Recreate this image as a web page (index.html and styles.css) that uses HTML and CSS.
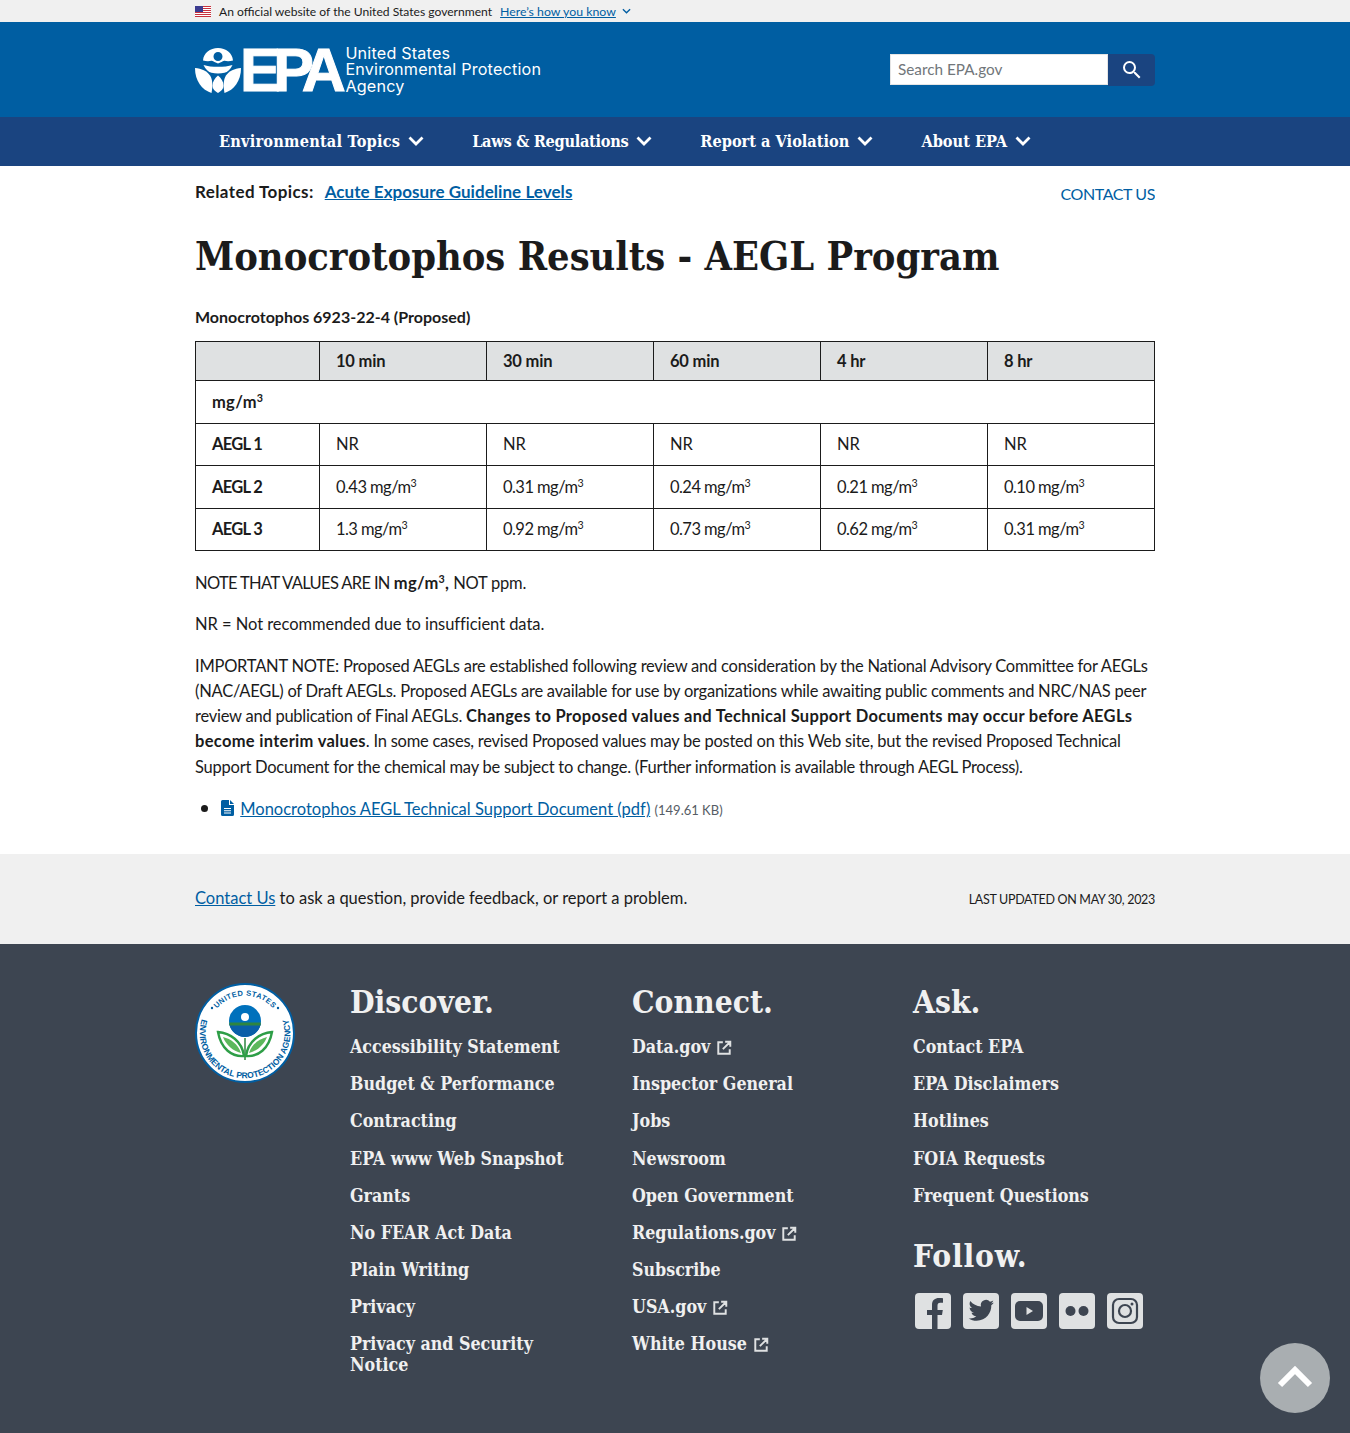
FILE: index.html
```html
<!DOCTYPE html>
<html lang="en">
<head>
<meta charset="utf-8">
<title>Monocrotophos Results - AEGL Program</title>
<link rel="stylesheet" href="styles.css">
</head>
<body>
<div class="gov-banner"><div class="wrap gov-inner">
  <svg class="flag" viewBox="0 0 16 11" width="16" height="11"><rect width="16" height="11" fill="#fff"/><g fill="#c8313e"><rect width="16" height="1"/><rect y="2" width="16" height="1"/><rect y="4" width="16" height="1"/><rect y="6" width="16" height="1"/><rect y="8" width="16" height="1"/><rect y="10" width="16" height="1"/></g><rect width="8" height="6" fill="#3b3b8f"/></svg>
  <span class="gov-text">An official website of the United States government</span>
  <a class="gov-link" href="#">Here’s how you know</a>
  <svg class="gov-chev" viewBox="0 0 10 6" width="9" height="6"><path d="M1 1l4 4 4-4" fill="none" stroke="#005ea2" stroke-width="1.5"/></svg>
</div></div>

<header class="masthead"><div class="wrap mast-inner">
  <a class="logo" href="#">
    <svg class="logo-mark" viewBox="0 0 46 46" width="46" height="46"><g fill="#fff"><path fill-rule="evenodd" d="M8 13.500C8.500 6 15 1 23 1s14.500 5 15 12.500c-3 .8-6 .8-8.500.3-1-.2-2 .5-3 1.200l-3.500 1.500-3.500-1.500c-1-.7-2-1.400-3-1.200-2.500.5-5.500.5-8.500-.3zM23 5a4.500 4.500 0 1 0 0 9 4.500 4.500 0 0 0 0-9z"/><path d="M8.500 18c4 1.300 9 1.800 14.500 1.800s10.500-.5 14.500-1.800c-2 4.500-5 7-8 7.800-2 .5-4.200.6-6.500.6s-4.500-.1-6.500-.6c-3-.8-6-3.300-8-7.800z"/><path d="M0 21c6.500.5 12 3 15 7.500 2.500 3.800 3 10 1.500 17.500C7 43 0 34 0 21z"/><path d="M46 21c-6.500.5-12 3-15 7.500-2.500 3.800-3 10-1.500 17.500C39 43 46 34 46 21z"/><path d="M23 28.500c3 2.500 5.500 6 5.500 10s-2.500 5.500-5.500 7.500c-3-2-5.500-3.500-5.500-7.500s2.500-7.500 5.500-10z"/></g></svg>
    <span class="logo-epa">EPA</span>
    <span class="logo-name">United States<br>Environmental Protection<br>Agency</span>
  </a>
  <form class="search">
    <input class="search-input" type="text" placeholder="Search EPA.gov">
    <button class="search-btn" type="button" aria-label="Search"><svg viewBox="0 0 24 24" width="24" height="24"><path fill="#fff" d="M15.500 14h-.79l-.28-.27A6.470 6.470 0 0 0 16 9.500 6.500 6.500 0 1 0 9.500 16c1.610 0 3.090-.59 4.230-1.570l.27.28v.79l5 4.990L20.490 19l-4.990-5zm-6 0C7.010 14 5 11.990 5 9.500S7.010 5 9.500 5 14 7.010 14 9.500 11.990 14 9.500 14z"/></svg></button>
  </form>
</div></header>

<nav class="mainnav"><div class="wrap nav-inner">
  <a class="nav-item nav-env" href="#">Environmental Topics<svg class="nav-chev" viewBox="0 0 16 10"><path d="M1.500 1.500L8 8l6.500-6.500" fill="none" stroke="#fff" stroke-width="2.800"/></svg></a>
  <a class="nav-item nav-laws" href="#">Laws &amp; Regulations<svg class="nav-chev" viewBox="0 0 16 10"><path d="M1.500 1.500L8 8l6.500-6.500" fill="none" stroke="#fff" stroke-width="2.800"/></svg></a>
  <a class="nav-item" href="#">Report a Violation<svg class="nav-chev" viewBox="0 0 16 10"><path d="M1.500 1.500L8 8l6.500-6.500" fill="none" stroke="#fff" stroke-width="2.800"/></svg></a>
  <a class="nav-item" href="#">About EPA<svg class="nav-chev" viewBox="0 0 16 10"><path d="M1.500 1.500L8 8l6.500-6.500" fill="none" stroke="#fff" stroke-width="2.800"/></svg></a>
</div></nav>

<main class="wrap content">
  <div class="topics">
    <p class="related"><strong class="related-label">Related Topics:</strong><a class="related-link" href="#">Acute Exposure Guideline Levels</a></p>
    <a class="contact-top" href="#">CONTACT US</a>
  </div>
  <h1 class="title">Monocrotophos Results - AEGL Program</h1>
  <p class="caption"><strong>Monocrotophos 6923-22-4 (Proposed)</strong></p>
  <table class="aegl">
    <colgroup><col class="c0"><col><col><col><col><col></colgroup>
    <tr class="head"><th></th><th>10 min</th><th>30 min</th><th>60 min</th><th>4 hr</th><th>8 hr</th></tr>
    <tr class="unit"><th colspan="6">mg/m<sup>3</sup></th></tr>
    <tr class="r1"><th>AEGL 1</th><td>NR</td><td>NR</td><td>NR</td><td>NR</td><td>NR</td></tr>
    <tr class="r2"><th>AEGL 2</th><td>0.43 mg/m<sup>3</sup></td><td>0.31 mg/m<sup>3</sup></td><td>0.24 mg/m<sup>3</sup></td><td>0.21 mg/m<sup>3</sup></td><td>0.10 mg/m<sup>3</sup></td></tr>
    <tr class="r2"><th>AEGL 3</th><td>1.3 mg/m<sup>3</sup></td><td>0.92 mg/m<sup>3</sup></td><td>0.73 mg/m<sup>3</sup></td><td>0.62 mg/m<sup>3</sup></td><td>0.31 mg/m<sup>3</sup></td></tr>
  </table>
  <p class="note first"><span class="caps">NOTE THAT VALUES ARE IN</span> <strong>mg/m<sup>3</sup>,</strong> NOT ppm.</p>
  <p class="note plain">NR = Not recommended due to insufficient data.</p>
  <p class="note long">IMPORTANT NOTE: Proposed AEGLs are established following review and consideration by the National Advisory Committee for AEGLs (NAC/AEGL) of Draft AEGLs. Proposed AEGLs are available for use by organizations while awaiting public comments and NRC/NAS peer review and publication of Final AEGLs. <strong>Changes to Proposed values and Technical Support Documents may occur before AEGLs become interim values</strong>. In some cases, revised Proposed values may be posted on this Web site, but the revised Proposed Technical Support Document for the chemical may be subject to change. (Further information is available through AEGL Process).</p>
  <ul class="docs"><li>
    <svg class="doc-icon" viewBox="0 0 14 16" width="14" height="16"><path fill="#005ea2" d="M1.500 0H8v5h5v9.500a1.500 1.500 0 0 1-1.500 1.500h-10A1.500 1.500 0 0 1 0 14.500v-13A1.500 1.500 0 0 1 1.500 0zM9 0l4 4H9zM3 8v1h7V8zm0 2.200v1h7v-1zm0 2.200v1h7v-1z" fill-rule="evenodd"/></svg>
    <a class="doc-link" href="#">Monocrotophos AEGL Technical Support Document (pdf)</a> <span class="doc-size">(149.61 KB)</span>
  </li></ul>
</main>

<section class="contact-band"><div class="wrap band-inner">
  <p class="band-text"><a href="#">Contact Us</a> to ask a question, provide feedback, or report a problem.</p>
  <p class="updated">LAST UPDATED ON MAY 30, 2023</p>
</div></section>

<footer class="footer"><div class="wrap foot-grid">
  <svg class="seal" viewBox="0 0 100 100" width="100" height="100">
    <circle cx="50" cy="50" r="49" fill="#fff" stroke="#005ea2" stroke-width="2"/>
    <defs>
      <path id="sealTop" d="M20 28A37 37 0 0 1 80 28"/>
      <path id="sealBot" d="M8 33A45.300 45.300 0 1 0 92 33"/>
    </defs>
    <text class="seal-text seal-upper"><textPath href="#sealTop" startOffset="50%" text-anchor="middle">UNITED STATES</textPath></text>
    <text class="seal-text"><textPath href="#sealBot" startOffset="50%" text-anchor="middle">ENVIRONMENTAL PROTECTION AGENCY</textPath></text>
    <circle cx="17" cy="25" r="1.200" fill="#005ea2"/><circle cx="83" cy="25" r="1.200" fill="#005ea2"/>
    <circle cx="50" cy="38" r="16" fill="#0071bc"/>
    <path d="M34.300 41h31.400a16 16 0 0 1-31.400 0z" fill="#0a5fa8"/>
    <path d="M34.200 39.500h31.600l-.3 3h-31z" fill="#2e8540"/>
    <circle cx="50" cy="34" r="4" fill="#fff"/>
    <path d="M50 55v22" fill="none" stroke="#2e8540" stroke-width="1.500"/>
    <path d="M49 73C37 74 26 66 23 49c12 1 24 9 26 24zM51 73c12 1 23-7 26-24-12 1-24 9-26 24z" fill="#fff" stroke="#2e9e47" stroke-width="2.400"/>
    <path d="M46 70C38 68 31 62 28 54c8 2 15 7 18 16zM54 70c8-2 15-8 18-16-8 2-15 7-18 16z" fill="#5cb85c"/>
  </svg>
  <div class="foot-col">
    <h2 class="foot-h">Discover.</h2>
    <ul class="foot-list">
      <li><a href="#">Accessibility Statement</a></li><li><a href="#">Budget &amp; Performance</a></li><li><a href="#">Contracting</a></li><li><a href="#">EPA www Web Snapshot</a></li><li><a href="#">Grants</a></li><li><a href="#">No FEAR Act Data</a></li><li><a href="#">Plain Writing</a></li><li><a href="#">Privacy</a></li><li><a href="#">Privacy and Security Notice</a></li>
    </ul>
  </div>
  <div class="foot-col">
    <h2 class="foot-h">Connect.</h2>
    <ul class="foot-list">
      <li><a href="#">Data.gov</a><svg class="ext" viewBox="0 0 14 14"><path d="M6 2H2v10h10V8M8 1.500h4.500V6M12.500 1.500L6 8" fill="none" stroke="#dfe1e2" stroke-width="1.700"/></svg></li>
      <li><a href="#">Inspector General</a></li><li><a href="#">Jobs</a></li><li><a href="#">Newsroom</a></li><li><a href="#">Open Government</a></li>
      <li><a href="#">Regulations.gov</a><svg class="ext" viewBox="0 0 14 14"><path d="M6 2H2v10h10V8M8 1.500h4.500V6M12.500 1.500L6 8" fill="none" stroke="#dfe1e2" stroke-width="1.700"/></svg></li>
      <li><a href="#">Subscribe</a></li>
      <li><a href="#">USA.gov</a><svg class="ext" viewBox="0 0 14 14"><path d="M6 2H2v10h10V8M8 1.500h4.500V6M12.500 1.500L6 8" fill="none" stroke="#dfe1e2" stroke-width="1.700"/></svg></li>
      <li><a href="#">White House</a><svg class="ext" viewBox="0 0 14 14"><path d="M6 2H2v10h10V8M8 1.500h4.500V6M12.500 1.500L6 8" fill="none" stroke="#dfe1e2" stroke-width="1.700"/></svg></li>
    </ul>
  </div>
  <div class="foot-col">
    <h2 class="foot-h">Ask.</h2>
    <ul class="foot-list">
      <li><a href="#">Contact EPA</a></li><li><a href="#">EPA Disclaimers</a></li><li><a href="#">Hotlines</a></li><li><a href="#">FOIA Requests</a></li><li><a href="#">Frequent Questions</a></li>
    </ul>
    <h2 class="foot-h follow">Follow.</h2>
    <div class="social">
      <svg viewBox="0 0 36 36" width="36" height="36"><rect x="0" width="36" height="36" rx="4" fill="#dfe1e2"/><path fill="#3d4551" d="M17 36V22h-5v-5h5v-5c0-5 3-7 7-7 1.500 0 3 .2 4 .3v4.500h-2.800c-2 0-2.700 1.200-2.700 3V17h5.300l-.8 5h-4.500v14z"/></svg>
      <svg viewBox="0 0 36 36" width="36" height="36"><rect width="36" height="36" rx="4" fill="#dfe1e2"/><path fill="#3d4551" d="M31 9.500c-1 .5-2 .8-3 .9 1.100-.7 1.900-1.700 2.300-2.900-1 .6-2.100 1-3.300 1.300A5.200 5.200 0 0 0 18 13.500c-4.300-.2-8.200-2.300-10.700-5.500-1.400 2.400-.7 5.400 1.600 7-.8 0-1.600-.2-2.300-.6 0 2.500 1.700 4.600 4.200 5.200-.8.200-1.600.2-2.300.1.600 2.100 2.600 3.600 4.800 3.600-2.200 1.700-4.900 2.400-7.600 2.100 2.300 1.500 5.100 2.300 7.900 2.300 9.600 0 15-8.100 14.700-15.400 1-.7 1.900-1.700 2.600-2.800z"/></svg>
      <svg viewBox="0 0 36 36" width="36" height="36"><rect width="36" height="36" rx="4" fill="#dfe1e2"/><rect x="4" y="8" width="28" height="20" rx="5" fill="#3d4551"/><path fill="#dfe1e2" d="M15.500 14l6.500 4-6.500 4z"/></svg>
      <svg viewBox="0 0 36 36" width="36" height="36"><rect width="36" height="36" rx="4" fill="#dfe1e2"/><circle cx="11.500" cy="18" r="5" fill="#3d4551"/><circle cx="24.500" cy="18" r="5" fill="#3d4551"/></svg>
      <svg viewBox="0 0 36 36" width="36" height="36"><rect width="36" height="36" rx="4" fill="#dfe1e2"/><rect x="6" y="6" width="24" height="24" rx="6" fill="none" stroke="#3d4551" stroke-width="2.200"/><circle cx="18" cy="18" r="6" fill="none" stroke="#3d4551" stroke-width="2.200"/><circle cx="25" cy="11" r="1.500" fill="#3d4551"/></svg>
    </div>
  </div>
</div></footer>
<a class="to-top" href="#" aria-label="Back to top"><svg viewBox="0 0 36 24" width="36" height="24"><path d="M3 19L18 4l15 15" fill="none" stroke="#fff" stroke-width="6"/></svg></a>
</body>
</html>
```
FILE: styles.css
```css
* { box-sizing: border-box; }
html, body { margin: 0; padding: 0; }
body { position: relative; height: 1433px; overflow: hidden; font-family: "Lato", "Liberation Sans", sans-serif; color: #1b1b1b; background: #fff; font-size: 16.500px; }
.wrap { width: 960px; margin: 0 auto; }
a { color: #005ea2; }
p { margin: 0; }
sup { font-size: 65%; line-height: 0; }

.gov-banner { height: 22px; background: #f0f0f0; font-size: 12.100px; }
.gov-inner { display: flex; align-items: center; height: 22px; }
.flag { margin-right: 8px; }
.gov-text { margin-right: 8px; }
.gov-link { margin-right: 6px; font-size: 12.300px; }

.masthead { height: 95px; background: #005ea2; }
.mast-inner { display: flex; align-items: center; justify-content: space-between; height: 95px; }
.logo { display: flex; align-items: center; color: #fff; text-decoration: none; }
.logo-mark { flex: none; margin-right: -1px; }
.logo-epa { font: bold 61px/46px "Liberation Sans", sans-serif; letter-spacing: -7.500px; -webkit-text-stroke: 1px #fff; margin-right: 7px; height: 46px; }
.logo-name { font: 16.150px/16.500px "Inter", sans-serif; letter-spacing: .2px; }
.search { display: flex; height: 32px; }
.search-input { width: 218px; height: 31px; border: 1px solid #e5e5e5; padding: 0 7px; font: 15.300px "Lato", sans-serif; background: #fff; }
.search-input::placeholder { color: #71767a; opacity: 1; }
.search-btn { width: 47px; height: 32px; padding: 0; border: 0; background: #1a4480; border-radius: 0 4px 4px 0; display: flex; align-items: center; justify-content: center; }

.mainnav { height: 49px; background: #1a4480; }
.nav-inner { display: flex; height: 49px; align-items: center; padding: 0 0 1px 24px; gap: 48px; }
.nav-item { display: flex; align-items: center; color: #fff; text-decoration: none; font: bold 16.200px "DejaVu Serif Condensed", "DejaVu Serif", serif; }
.nav-env { letter-spacing: .2px; }
.nav-laws { letter-spacing: -.3px; }
.nav-chev { width: 16px; height: 10px; margin-left: 8px; }

.content { height: 688px; overflow: hidden; }
.topics { display: flex; justify-content: space-between; align-items: flex-start; padding-top: 15px; height: 58px; }
.related { font-size: 17px; line-height: 22px; }
.related-label { margin-right: 11px; letter-spacing: .4px; }
.related-link { font-weight: 700; letter-spacing: .05px; }
.contact-top { font-size: 16px; line-height: 26px; letter-spacing: -.4px; text-decoration: none; }
.title { margin: 0; font: bold 39.400px/46px "DejaVu Serif Condensed", "DejaVu Serif", serif; padding-top: 9px; height: 58px; }
.caption { margin-top: 24px; font-size: 16px; line-height: 22px; }
.aegl { width: 960px; margin-top: 13px; border-collapse: collapse; table-layout: fixed; font-size: 16.500px; }
.c0 { width: 124px; }
.aegl th, .aegl td { border: 1px solid #1b1b1b; padding: 0 16px; text-align: left; font-weight: 400; }
.aegl th { font-weight: 700; letter-spacing: -.2px; }
.aegl .unit th { letter-spacing: .3px; }
.aegl .r1 th, .aegl .r2 th { letter-spacing: -.7px; }
.aegl .r2 td { letter-spacing: -.55px; }
.aegl .head { height: 39px; }
.aegl .head th { background: #dfe1e2; }
.aegl .unit { height: 43px; }
.aegl .r1 { height: 42px; }
.aegl .r1 th, .aegl .r1 td { padding-bottom: 2px; }
.aegl .r2 { height: 42.500px; }
.note { line-height: 25.300px; margin-top: 16px; letter-spacing: -.24px; }
.note.first { margin-top: 20px; }
.note.plain { letter-spacing: -.05px; }
.note strong { letter-spacing: .3px; }
.caps { letter-spacing: -.65px; }
.docs { margin: 14px 0 0; padding-left: 26px; line-height: 26px; }
.docs li::marker { font-size: 20px; }
.doc-icon { vertical-align: -1px; margin-right: 1px; }
.doc-size { font-size: 13px; color: #565c65; }

.contact-band { height: 90px; background: #f0f0f0; }
.band-inner { display: flex; justify-content: space-between; align-items: center; height: 90px; }
.band-text { padding-bottom: 2px; }
.updated { font-size: 12.500px; letter-spacing: -.3px; }

.footer { height: 489px; background: #3d4551; color: #f0f0f0; }
.foot-grid { display: grid; grid-template-columns: 155px 282px 281px 242px; padding-top: 39px; }
.seal { display: block; }
.seal-text { font: bold 8.500px "Liberation Sans", sans-serif; fill: #005ea2; }
.seal-upper { font-size: 7.500px; letter-spacing: .4px; }
.foot-h { margin: 0; font: bold 31.500px/38px "DejaVu Serif Condensed", "DejaVu Serif", serif; color: #f0f0f0; }
.foot-list { list-style: none; margin: 15.200px 0 0; padding: 0; }
.foot-list li { margin-bottom: 16.120px; font: bold 17.700px/21px "DejaVu Serif Condensed", "DejaVu Serif", serif; max-width: 230px; }
.foot-list a { color: #f0f0f0; text-decoration: none; }
.ext { width: 16px; height: 16px; margin-left: 6px; vertical-align: -3px; }
.follow { margin-top: 31.500px; letter-spacing: .8px; }
.social { display: flex; gap: 12px; margin-top: 18px; padding-left: 2px; }
.to-top { position: absolute; left: 1260px; top: 1343px; width: 70px; height: 70px; border-radius: 50%; background: #a9aeb1; display: flex; align-items: center; justify-content: center; }
```
